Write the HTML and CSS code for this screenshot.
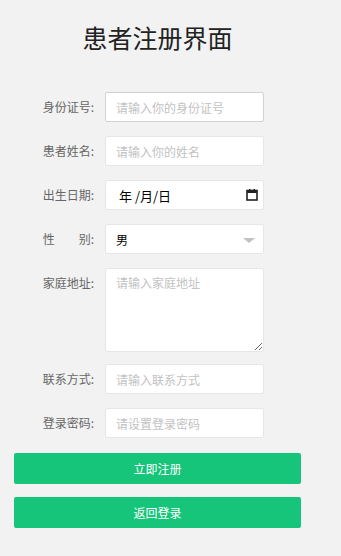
FILE: index.html
```html
<!DOCTYPE html>
<html lang="zh-CN">
<head>
  <meta charset="UTF-8" />
  <meta name="viewport" content="width=device-width, initial-scale=1.0"/>
  <title>患者注册界面</title>
  <link rel="stylesheet" href="styles.css">
</head>
<body>
  <div class="wrap">
    <h1>患者注册界面</h1>
    <form class="form">
      <div class="item">
        <label>身份证号:</label>
        <input type="text" class="input hover" placeholder="请输入你的身份证号" />
      </div>
      <div class="item">
        <label>患者姓名:</label>
        <input type="text" class="input" placeholder="请输入你的姓名" />
      </div>
      <div class="item">
        <label>出生日期:</label>
        <div class="input date">
          <span>年 /月/日</span>
          <svg width="12" height="12" viewBox="0 0 12 12">
            <rect x="1" y="1.5" width="10" height="9.5" fill="none" stroke="#222" stroke-width="1.6"/>
            <rect x="1" y="1.5" width="10" height="2.5" fill="#222"/>
            <rect x="3" y="0" width="1.5" height="2" fill="#222"/>
            <rect x="7.5" y="0" width="1.5" height="2" fill="#222"/>
          </svg>
        </div>
      </div>
      <div class="item">
        <label>性&emsp;&emsp;别:</label>
        <div class="input select"><span>男</span></div>
      </div>
      <div class="item tall">
        <label>家庭地址:</label>
        <textarea class="input area" placeholder="请输入家庭地址"></textarea>
      </div>
      <div class="item">
        <label>联系方式:</label>
        <input type="text" class="input" placeholder="请输入联系方式" />
      </div>
      <div class="item">
        <label>登录密码:</label>
        <input type="password" class="input" placeholder="请设置登录密码" />
      </div>
      <button type="button" class="btn first">立即注册</button>
      <button type="button" class="btn">返回登录</button>
    </form>
  </div>
</body>
</html>
```

FILE: styles.css
```css
body {
  margin: 0;
  background: #f2f2f2;
  font-family: "Noto Sans CJK SC", "Noto Sans", sans-serif;
  color: #333;
}
.wrap {
  width: 287px;
  margin-left: 14px;
}
h1 {
  margin: 21px 0 0;
  font-size: 25px;
  line-height: 32px;
  font-weight: normal;
  text-align: center;
  color: #222;
}
.form {
  padding-top: 39px;
}
.item {
  display: flex;
  align-items: flex-start;
  margin-bottom: 14px;
}
.item.tall { margin-bottom: 12px; }
.item label {
  width: 80px;
  line-height: 30px;
  font-size: 12px;
  color: #666;
  text-align: right;
  margin-right: 11px;
}
.input {
  box-sizing: border-box;
  width: 159px;
  height: 30px;
  padding: 0 10px;
  border: 1px solid #e6e6e6;
  border-radius: 2px;
  background: #fff;
  font-family: inherit;
  font-size: 12px;
  color: #000;
  outline: none;
}
.input.hover { border-color: #d2d2d2; }
.input::placeholder { color: #c2c2c2; }
.date {
  display: flex;
  align-items: center;
  justify-content: space-between;
  padding: 0 5px 0 13px;
  font-size: 13px;
}
.select {
  position: relative;
  display: flex;
  align-items: center;
}
.select::after {
  content: "";
  position: absolute;
  right: 8px;
  top: 13px;
  border-style: solid;
  border-width: 5px 6px 0;
  border-color: #c2c2c2 transparent transparent;
}
.area {
  height: 84px;
  padding: 5px 10px;
  resize: vertical;
  line-height: 18px;
}
.btn {
  display: block;
  width: 287px;
  height: 31px;
  border: none;
  border-radius: 2px;
  background: #16c47a;
  color: #fff;
  font-family: inherit;
  font-size: 12px;
  margin-top: 13px;
}
.btn.first { margin-top: 15px; }
```
